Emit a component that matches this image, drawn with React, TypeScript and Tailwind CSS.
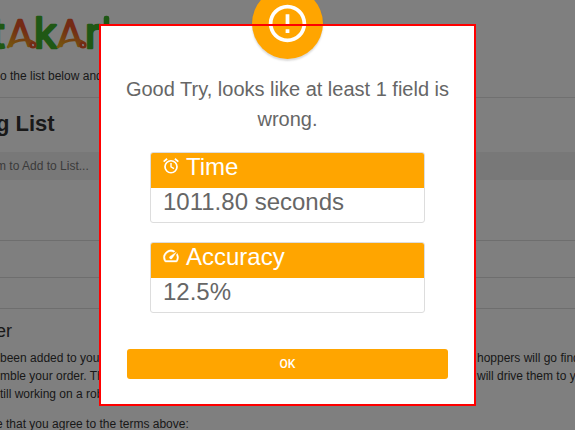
import type { ReactNode } from "react";
import { MdErrorOutline } from "react-icons/md";

function Carrot({ x }: { x: number }) {
  return (
    <g transform={`translate(${x} 0)`} stroke="url(#carrot)" strokeLinecap="round" strokeLinejoin="round">
      <text x="0" y="46" fontSize="36" fontWeight="300" fill="url(#carrot)" strokeWidth="2.4">Λ</text>
      <path d="M0 47C4 42 11 39 20 40Q24 41 26 43" fill="none" strokeWidth="2.8" />
      <circle cx="25" cy="45" r="2.4" fill="none" stroke="#e8562a" strokeWidth="2.4" />
    </g>
  );
}

function Logo() {
  return (
    <svg className="block h-[67px] w-32 font-[Inter,sans-serif]" viewBox="0 0 128 67" role="img" aria-label="InstaKart">
      <defs>
        <linearGradient id="carrot" gradientUnits="userSpaceOnUse" x1="16" y1="20" x2="8" y2="49">
          <stop offset="0.3" stopColor="#e8562a" />
          <stop offset="1" stopColor="#ecb01c" />
        </linearGradient>
      </defs>
      <g fill="#3fb02a" stroke="#3fb02a" strokeWidth="2.6" strokeLinejoin="round" fontSize="42">
        <text x="-9" y="48">t</text>
        <text x="34" y="48">k</text>
        <text x="85" y="48">r</text>
        <rect x="105" y="17" width="3" height="31" rx="1" />
      </g>
      <Carrot x={8} />
      <Carrot x={58} />
    </svg>
  );
}

function AlarmIcon() {
  return (
    <svg
      className="size-[18px]"
      viewBox="0 0 24 24"
      fill="none"
      stroke="currentColor"
      strokeWidth="2.3"
      aria-hidden="true"
    >
      <circle cx="12" cy="13" r="8" />
      <path d="M12 8v5.2l4 2.4" strokeWidth="1.9" />
      <path d="M2.2 6.2l4.6-3.9M21.8 6.2l-4.6-3.9" />
    </svg>
  );
}

function GaugeIcon() {
  return (
    <svg className="size-[18px]" viewBox="0 0 24 24" fill="currentColor" stroke="currentColor" strokeWidth="0.5" aria-hidden="true">
      <path d="M20.38 8.57l-1.23 1.85a8 8 0 0 1-.22 7.58H5.07A8 8 0 0 1 15.58 6.85l1.85-1.23A10 10 0 0 0 3.35 19a2 2 0 0 0 1.72 1h13.85a2 2 0 0 0 1.74-1 10 10 0 0 0-.27-10.44z" />
      <path d="M10.59 15.41a2 2 0 0 0 2.83 0l5.66-8.49-8.49 5.66a2 2 0 0 0 0 2.83z" />
    </svg>
  );
}

function Line({ left, right }: { left: string; right?: string }) {
  return (
    <div className="grid grid-cols-[477px_1fr] whitespace-nowrap">
      <span>{left}</span>
      <span>{right}</span>
    </div>
  );
}

function Card({ icon, title, value }: { icon: ReactNode; title: string; value: string }) {
  return (
    <section className="overflow-hidden rounded-[3px] border border-[#dddddd] text-2xl">
      <h3 className="flex h-[35px] items-start gap-[6px] bg-[#ffa500] px-[11px] leading-7 text-white">
        <span className="pt-1">{icon}</span>
        {title}
      </h3>
      <p className="h-[34px] px-3 leading-7 text-[#666666]">{value}</p>
    </section>
  );
}

export default function App() {
  return (
    <div className="relative h-screen overflow-hidden bg-white font-['Liberation_Sans',Arial,sans-serif] text-xs leading-[18px] text-[#333333]">
      <main>
        <header className="border-b border-[#e0e0e0] pb-3">
          <Logo />
          <Line left="o the list below and" />
        </header>
        <h1 className="-ml-1 pt-3 text-[22px] leading-7 font-bold">g List</h1>
        <div className="h-[14px]" />
        <input
          aria-label="Item to Add to List"
          placeholder="m to Add to List..."
          className="-ml-1 block h-7 w-[calc(100%+4px)] bg-[#f0f0f0] placeholder:text-[#777777]"
        />
        <div className="h-[61px] border-b border-[#dddddd]" />
        <div className="h-[37px] border-b border-[#dddddd]" />
        <div className="h-[31px] border-b border-[#dddddd]" />
        <h2 className="-ml-1 pt-3 pb-2 text-lg leading-5">er</h2>
        <Line left="been added to you" right="hoppers will go find" />
        <Line left="mble your order. The" right=" will drive them to you" />
        <Line left="till working on a robot" />
        <div className="-ml-1 pt-3">
          <Line left="e that you agree to the terms above:" />
        </div>
      </main>

      <div className="absolute inset-0 flex items-start justify-center bg-black/50 pt-6">
        <div role="dialog" aria-label="Result" className="relative w-[377px] bg-white px-7 pt-[50px] pb-[27px]">
          <div className="absolute inset-x-0 -top-9 flex justify-center">
            <div className="flex size-[71px] items-center justify-center rounded-full bg-[#ffa500] text-white shadow-[0_2px_2px_rgba(0,0,0,0.15)]">
              <MdErrorOutline className="size-[45px]" />
            </div>
          </div>
          <p className="-mx-1 text-center text-xl leading-[30px] text-[#666666]">
            Good Try, looks like at least 1 field is wrong.
          </p>
          <div className="grid gap-[19px] px-[23px] pt-[18px] pb-9">
            <Card icon={<AlarmIcon />} title="Time" value="1011.80 seconds" />
            <Card icon={<GaugeIcon />} title="Accuracy" value="12.5%" />
          </div>
          <button type="button" className="block h-[30px] w-full rounded-[3px] bg-[#ffa500] font-[Roboto,sans-serif] text-xs font-medium text-white">
            OK
          </button>
          <div className="pointer-events-none absolute inset-0 border-2 border-[#ff0000]" />
        </div>
      </div>
    </div>
  );
}
